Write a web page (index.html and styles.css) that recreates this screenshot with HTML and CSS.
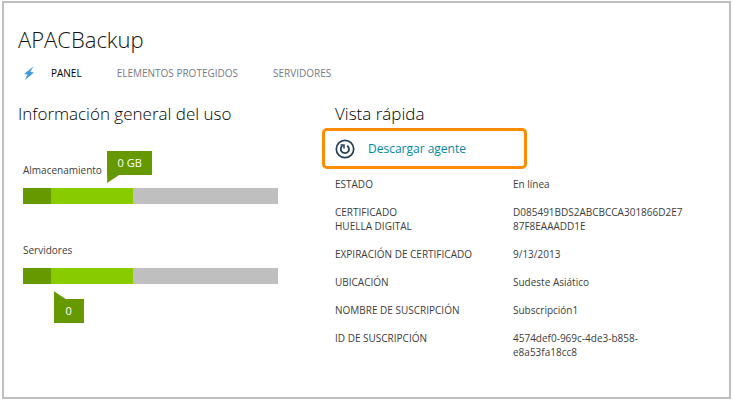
FILE: index.html
```html
<!DOCTYPE html>
<html lang="es">
<head>
<meta charset="utf-8">
<title>APACBackup</title>
<link rel="stylesheet" href="styles.css">
</head>
<body>
<main class="frame">
  <h1 class="title">APACBackup</h1>
  <nav class="tabs">
    <a class="tab-icon" href="#inicio" aria-label="Inicio rápido">
      <svg viewBox="0 0 12 14" width="12" height="14"><path d="M10.5 0.5 1 8 4.6 8.4 2 14 11 6.6 7.2 6z" fill="#3d9adb"/></svg>
    </a>
    <a class="tab tab-active" href="#panel">PANEL</a>
    <a class="tab" href="#elementos">ELEMENTOS PROTEGIDOS</a>
    <a class="tab" href="#servidores">SERVIDORES</a>
  </nav>
  <div class="columns">
    <section class="usage">
      <h2 class="heading">Información general del uso</h2>
      <div class="meter">
        <p class="meter-label">Almacenamiento</p>
        <div class="bar">
          <span class="used"></span><span class="reserved"></span>
          <span class="callout callout-above">0 GB</span>
        </div>
      </div>
      <div class="meter">
        <p class="meter-label">Servidores</p>
        <div class="bar">
          <span class="used"></span><span class="reserved"></span>
          <span class="callout callout-below">0</span>
        </div>
      </div>
    </section>
    <section class="glance">
      <h2 class="heading glance-heading">Vista rápida</h2>
      <a class="download" href="#descargar">
        <svg viewBox="0 0 20 20" width="20" height="20" fill="none" stroke="#233f54">
          <circle cx="10" cy="10" r="8.7" stroke-width="1.7"/>
          <path d="M12.2 6.7A4.1 4.1 0 1 1 7.3 6.9" stroke-width="1.8"/>
          <path d="M5.6 6.1H9V9.5" stroke-width="1.5"/>
        </svg>
        <span>Descargar agente</span>
      </a>
      <dl class="facts">
        <dt>ESTADO</dt><dd>En línea</dd>
        <dt>CERTIFICADO<br>HUELLA DIGITAL</dt><dd>D085491BDS2ABCBCCA301866D2E7<br>87F8EAAADD1E</dd>
        <dt>EXPIRACIÓN DE CERTIFICADO</dt><dd>9/13/2013</dd>
        <dt>UBICACIÓN</dt><dd>Sudeste Asiático</dd>
        <dt>NOMBRE DE SUSCRIPCIÓN</dt><dd>Subscripción1</dd>
        <dt>ID DE SUSCRIPCIÓN</dt><dd>4574def0-969c-4de3-b858-<br>e8a53fa18cc8</dd>
      </dl>
    </section>
  </div>
</main>
</body>
</html>
```
FILE: styles.css
```css
* { box-sizing: border-box; }
body {
  margin: 0;
  padding: 1px 2px 2px;
  background: #fff;
  color: #3c3c3c;
  font: 10px/14px "Open Sans", "Noto Sans", sans-serif;
}
h1, h2, p, dl, dd { margin: 0; }
a { text-decoration: none; }
.frame {
  min-height: calc(100vh - 3px);
  padding: 20px 14px 32px;
  border: 2px solid #c0c0c0;
}
.title {
  font-size: 22px;
  line-height: 32px;
  font-weight: 300;
  color: #111;
}
.tabs {
  display: flex;
  align-items: center;
  gap: 35px;
  height: 14px;
  margin-top: 11px;
  padding-left: 5px;
}
.tab-icon { display: flex; margin-right: -19px; }
.tab { color: #757a85; white-space: nowrap; }
.tab-active { color: #000; }
.columns {
  display: grid;
  grid-template-columns: 304fr 393fr;
  margin-top: 22px;
}
.heading {
  font-size: 17px;
  line-height: 24px;
  font-weight: 300;
  color: #000;
  white-space: nowrap;
}
.usage { padding-right: 44px; }
.meter { padding-left: 5px; margin-top: 37px; }
.meter + .meter { margin-top: 39px; }
.meter-label { margin-bottom: 11px; }
.bar {
  position: relative;
  display: flex;
  height: 16px;
  background: #bfbfbf;
}
.used { width: 11%; background: #690; }
.reserved { width: 32%; background: #8c0; }
.callout {
  position: absolute;
  height: 24px;
  background: #690;
  color: #fff;
  font-size: 11px;
  line-height: 24px;
  text-align: center;
  white-space: nowrap;
}
.callout::after {
  content: "";
  position: absolute;
  left: 0;
  width: 12px;
  height: 8px;
  background: #690;
}
.callout-above { left: 33%; bottom: 29px; min-width: 45px; }
.callout-above::after { top: 24px; clip-path: polygon(0 0, 100% 0, 0 100%); }
.callout-below { left: 12%; top: 31px; min-width: 30px; }
.callout-below::after { bottom: 24px; clip-path: polygon(0 0, 100% 100%, 0 100%); }
.glance-heading { padding-left: 13px; }
.download {
  display: flex;
  align-items: center;
  gap: 13px;
  width: 205px;
  height: 41px;
  margin-top: 2px;
  padding-left: 10px;
  border: 3px solid #ff8c00;
  border-radius: 5px;
  color: #0089a3;
  font-size: 12px;
  line-height: 18px;
}
.facts {
  display: grid;
  grid-template-columns: 178px 1fr;
  row-gap: 14px;
  margin-top: 8px;
  padding-left: 13px;
}
```
